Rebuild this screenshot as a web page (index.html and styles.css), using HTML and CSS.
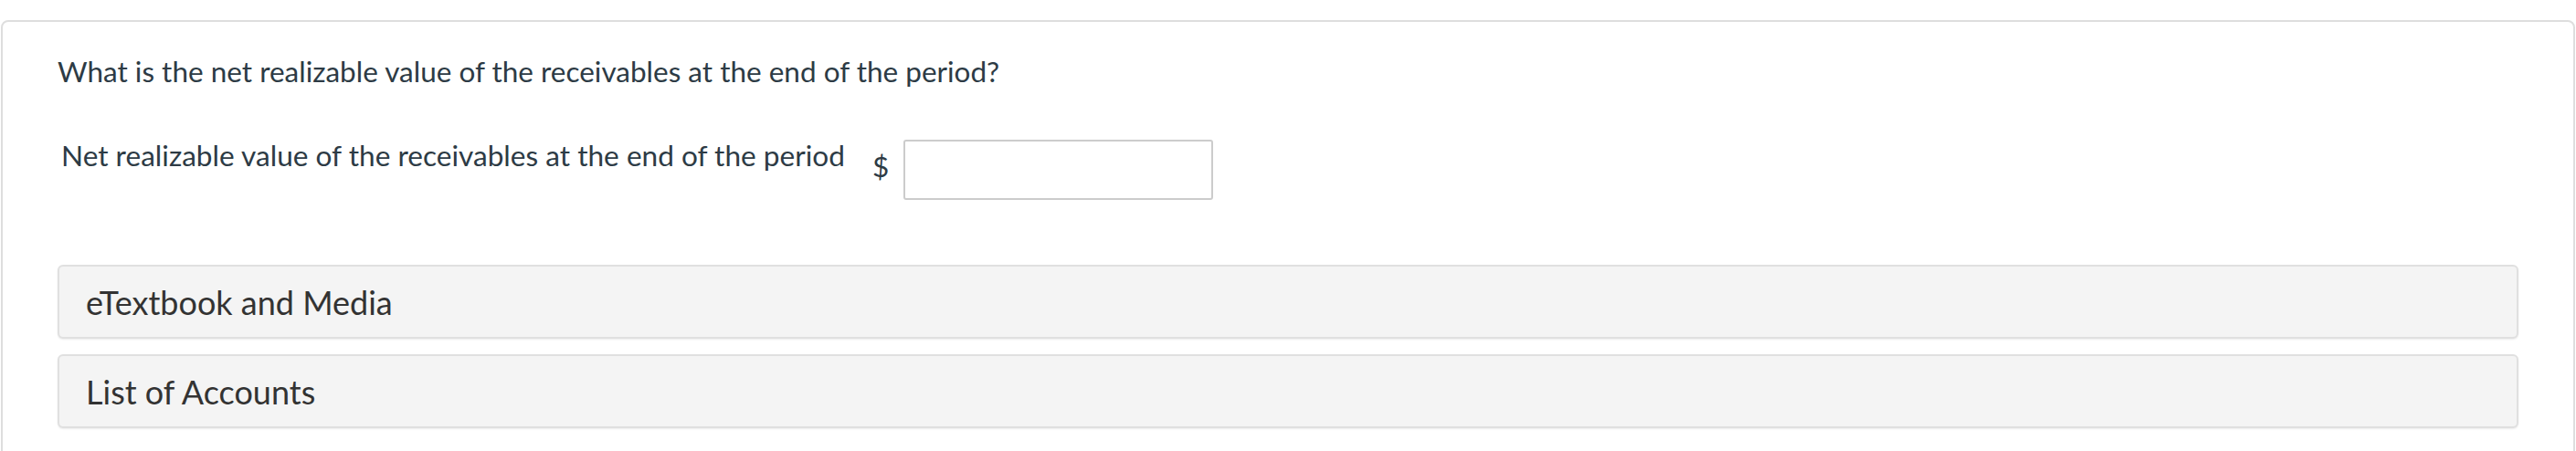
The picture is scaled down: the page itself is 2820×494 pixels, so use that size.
FILE: index.html
```html
<!DOCTYPE html>
<html>
<head>
<meta charset="utf-8">
<link rel="stylesheet" href="styles.css">
</head>
<body>
<div class="card">
  <p class="question">What is the net realizable value of the receivables at the end of the period?</p>
  <div class="answer-row">
    <span class="answer-label">Net realizable value of the receivables at the end of the period</span>
    <span class="currency">$</span>
    <input class="answer-input" type="text">
  </div>
  <div class="panels">
    <div class="panel">eTextbook and Media</div>
    <div class="panel">List of Accounts</div>
  </div>
</div>
</body>
</html>
```

FILE: styles.css
```css
html, body {
  margin: 0;
  padding: 0;
  background: #ffffff;
}
body {
  font-family: Lato, "Open Sans", sans-serif;
}
.card {
  margin: 22px 1px 0 1px;
  border: 2px solid #dedede;
  border-radius: 8px;
  padding: 35px 60px 60px 60px;
  min-height: 500px;
}
.question {
  margin: 0;
  font-size: 31.5px;
  line-height: 38px;
  color: #2d3b45;
}
.answer-row {
  display: flex;
  align-items: flex-start;
  margin-top: 54px;
  padding-left: 4px;
}
.answer-label {
  font-size: 31.6px;
  line-height: 38px;
  color: #2d3b45;
}
.currency {
  font-size: 31.5px;
  line-height: 38px;
  color: #2d3b45;
  margin-left: 30px;
  margin-top: 12px;
}
.answer-input {
  margin: 2px 0 0 16px;
  width: 339px;
  height: 66px;
  box-sizing: border-box;
  border: 2px solid #cccccc;
  border-radius: 3px;
  padding: 0 10px;
  font-family: Lato, sans-serif;
  font-size: 28px;
  background: #fff;
  outline: none;
}
.panels {
  margin-top: 71px;
  display: flex;
  flex-direction: column;
  gap: 17px;
}
.panel {
  height: 81px;
  box-sizing: border-box;
  border: 2px solid #e0e0e0;
  border-radius: 6px;
  background: #f4f4f4;
  box-shadow: 0 1px 2px rgba(0, 0, 0, 0.08);
  display: flex;
  align-items: center;
  padding-left: 29px;
  font-size: 36px;
  color: #333333;
}
```
